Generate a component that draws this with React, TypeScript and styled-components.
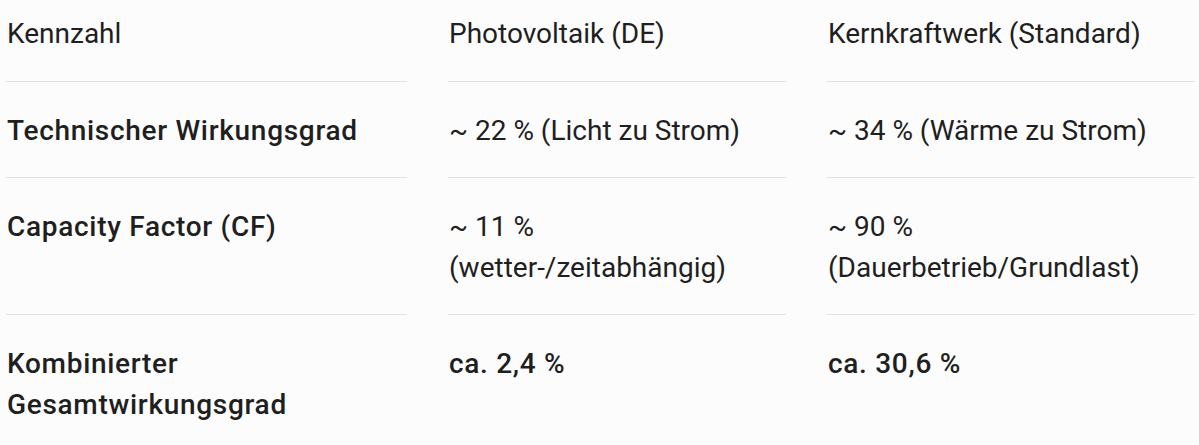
import React from "react";
import styled, { createGlobalStyle } from "styled-components";

const Global = createGlobalStyle`
  html, body { margin: 0; padding: 0; background: #fcfcfc; }
  body { font-family: Roboto, "Noto Sans", Arial, sans-serif; color: #1f1f1f; }
`;

const Table = styled.div`
  display: grid;
  grid-template-columns: 401px 338px 368px;
  column-gap: 41px;
  padding-left: 6px;
  font-size: 28px;
  line-height: 41px;
`;

const Cell = styled.div<{ $head?: boolean; $strong?: boolean; $last?: boolean }>`
  padding: ${(p) => (p.$head ? "13px 0 27px 1px" : "28px 0 26px 1px")};
  border-bottom: ${(p) => (p.$last ? "none" : "1px solid #e3e3e3")};
  font-weight: ${(p) => (p.$strong ? 500 : 400)};
  letter-spacing: ${(p) => (p.$strong ? "0.7px" : "0")};
`;

type Row = { label: string; pv: string[]; kk: string[]; strongValues?: boolean };

const rows: Row[] = [
  { label: "Technischer Wirkungsgrad", pv: ["~ 22 % (Licht zu Strom)"], kk: ["~ 34 % (Wärme zu Strom)"] },
  { label: "Capacity Factor (CF)", pv: ["~ 11 %", "(wetter-/zeitabhängig)"], kk: ["~ 90 %", "(Dauerbetrieb/Grundlast)"] },
  { label: "Kombinierter Gesamtwirkungsgrad", pv: ["ca. 2,4 %"], kk: ["ca. 30,6 %"], strongValues: true },
];

const Lines = ({ items }: { items: string[] }) => (
  <>
    {items.map((t, i) => (
      <React.Fragment key={i}>
        {i > 0 && <br />}
        {t}
      </React.Fragment>
    ))}
  </>
);

export default function App() {
  return (
    <>
      <Global />
      <Table>
        <Cell $head>Kennzahl</Cell>
        <Cell $head>Photovoltaik (DE)</Cell>
        <Cell $head>Kernkraftwerk (Standard)</Cell>
        {rows.map((r, i) => {
          const last = i === rows.length - 1;
          return (
            <React.Fragment key={r.label}>
              <Cell $strong $last={last}>{r.label}</Cell>
              <Cell $strong={r.strongValues} $last={last}><Lines items={r.pv} /></Cell>
              <Cell $strong={r.strongValues} $last={last}><Lines items={r.kk} /></Cell>
            </React.Fragment>
          );
        })}
      </Table>
    </>
  );
}
